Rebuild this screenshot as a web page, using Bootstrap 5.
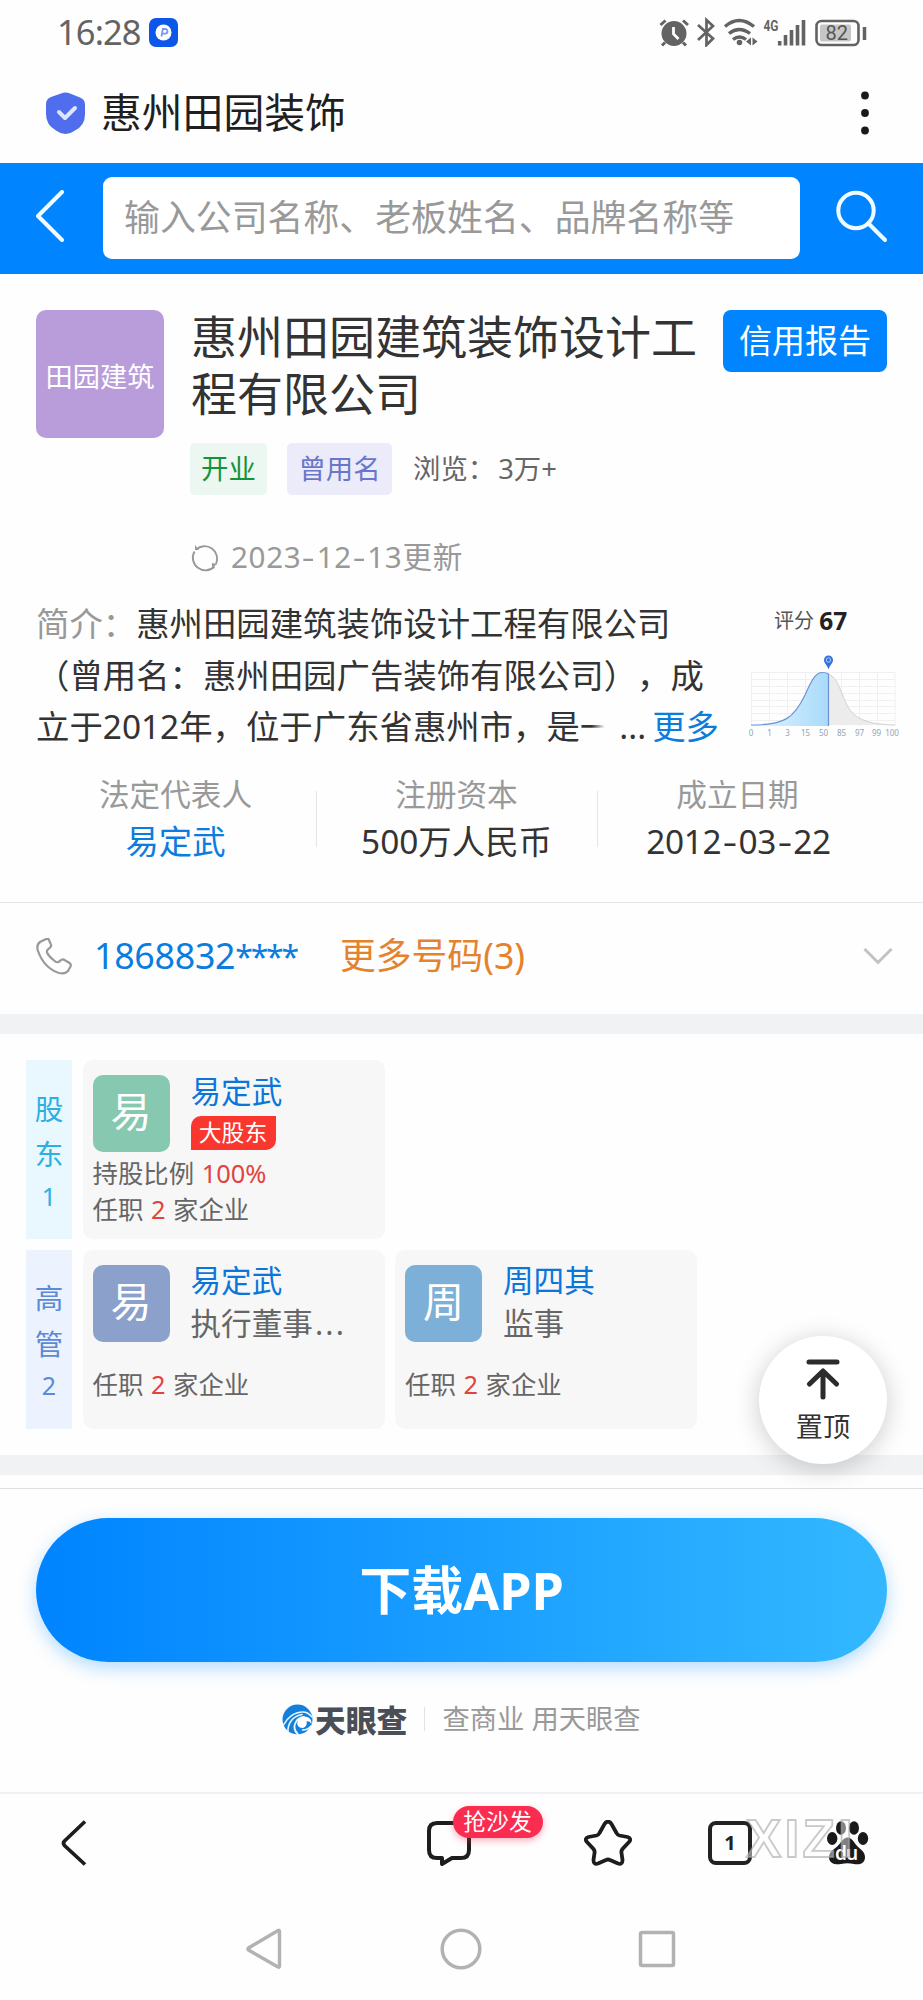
<!DOCTYPE html>
<html lang="zh-CN">
<head>
<meta charset="utf-8">
<meta name="viewport" content="width=device-width, initial-scale=1">
<title>惠州田园装饰</title>
<link rel="stylesheet" href="https://cdn.jsdelivr.net/npm/bootstrap@5.3.0/dist/css/bootstrap.min.css">
<style>
body{font-family:"Noto Sans","Noto Sans CJK SC",sans-serif;color:#333;background:#fefefe;font-size:33.4px;line-height:1;overflow-x:hidden;text-spacing-trim:space-all}
svg{display:block;flex:none}
a{text-decoration:none}
.phone{width:923px;height:2000px;overflow:hidden}
.hy{display:inline-block;width:.52em;text-align:center;font-style:normal;transform:scaleX(1.35)}
.status{height:64px;padding:0 54px 0 57px;color:#636363}
.clock{font-size:34.5px;letter-spacing:-.9px}
.titlebar{height:99px;padding:0 51px 2px 46px;color:#1f1f1f;font-size:40.8px}
.searchbar{height:111px;background:#0084ff;padding:0 35px 5px 36px}
.searchbox{width:697px;height:82px;border-radius:9px;background:#fff;padding-left:21px;font-size:35.9px;color:#999;margin:4px 0 0 39px}
.profile{height:629px;padding:36px 36px 0;border-bottom:1px solid #e4e6e9}
.logo{width:128px;height:128px;border-radius:10px;background:#b99ddb;color:#fff;font-size:27.2px;padding-top:6px}
.cname{width:520px;font-size:46px;line-height:56.5px;margin:-2px 0 0 27px;height:116px}
.report{width:164px;height:62px;border-radius:8px;background:#0084ff;color:#fff;font-size:33px;padding-bottom:2px}
.tags{margin:5px 0 0 154px;height:52px;font-size:27.4px;color:#666}
.tag{height:52px;border-radius:5px}
.open{width:77px;background:#ebf7f0;color:#149439}
.former{width:105px;background:#ebebfa;color:#6a76c9;margin:0 21px 0 20px}
.views{margin-left:3px}
.update{margin:42px 0 0 154px;height:40px;font-size:29.6px;color:#999}
.update .num{letter-spacing:.65px;margin-left:1px}
.intro{width:688px;height:156px;line-height:51.5px;margin-top:21px;font-size:33.4px;white-space:nowrap}
.label{color:#999}
.link{color:#0a7ddf}
.fadeout{background:linear-gradient(90deg,#333 35%,transparent 75%);-webkit-background-clip:text;background-clip:text;color:transparent}
.dots{margin:0 6px 0 6px}
.score{width:164px;height:144px;margin:32px -12px 0 0;font-size:20px;color:#555}
.score .head{padding-left:39px}
.score b{font-size:24.5px;color:#222}
.facts{margin:19px 9px 0 -1px;font-size:33.4px}
.fact{width:281px;height:102px}
.fact .label{font-size:30.6px;height:43px}
.fact .val{height:51px}
.fact .date{letter-spacing:-.35px;margin-left:2px}
.fact + .fact::before{content:"";position:absolute;left:0;top:18px;height:56px;width:1px;background:#e5e5e5}
.phonerow{height:111px;padding:0 30px 5px 36px;font-size:35.8px}
.tel{margin-left:22px;letter-spacing:-.3px}
.stars{font-size:32px;letter-spacing:-2.2px}
.more{margin-left:43px;color:#e5822c}
.band{height:20px;background:#f1f2f4}
.people{height:421px;padding:26px}
.second{margin-top:10.5px}
.side{width:46px;height:179px;padding-top:26px;font-size:28.5px}
.side span{height:45.5px}
.side small{font-size:25px;height:38px}
.holder{background:#e9f7ff;color:#2bb0e0}
.exec{background:#ecf2fe;color:#5b8ad6}
.person{width:302px;height:179px;border-radius:10px;background:#f7f7f7;margin-left:10.5px;padding:15px 10px;position:relative}
.face{width:77px;height:77px;border-radius:10px;color:#fff;font-size:41px;padding-bottom:4px}
.face-green{background:#86c8b0}
.face-indigo{background:#8ba1cc}
.face-blue{background:#7cb0d8}
.who{margin-left:21px}
.pname{font-size:30.6px;height:32px;color:#0a76da}
.post{font-size:30.6px;height:40px;margin-top:7px;color:#666}
.cut{letter-spacing:2.3px;margin-left:2px}
.major{width:85px;height:34px;background:#f9372f;color:#fff;font-size:22.8px;border-radius:10px 0;margin-top:9px}
.line{font-size:25.4px;height:36px;color:#666;white-space:pre;word-spacing:1px}
.line b{font-weight:400;color:#e0443e}
.lower{margin-top:23px}
.totop{right:36px;top:1336px;width:128px;height:128px;border-radius:50%;background:#fff;box-shadow:0 4px 26px rgba(0,0,0,.2);font-size:27.2px;color:#333;z-index:3;padding-top:23px;gap:12px}
.download{height:304px;margin-top:13px;border-top:1px solid #dedfe1;padding:29px 36px 0}
.dbtn{height:144px;border-radius:72px;background:linear-gradient(90deg,#0084ff,#33b8ff);color:#fff;font-size:52px;font-weight:700;box-shadow:0 6px 18px rgba(0,140,255,.3)}
.brand{height:40px;margin-top:37px;padding-left:246px;font-size:27.3px;color:#999}
.brandname{font-family:"Noto Sans CJK SC",sans-serif;font-weight:900;color:#4a4e57;font-size:30.8px;margin-left:2px}
.sep{width:1px;height:24px;background:#e2e2e2;margin:0 17px 0 17px}
.tabs{height:108px;border-top:2px solid #f1f1f3;padding:0 51px 8px 60px}
.t2{margin-left:338px}
.t3{margin-left:112px}
.t4{margin-left:76px}
.t5{margin-left:75px}
.pill{left:26.5px;top:-14px;width:90px;height:32px;border-radius:16px;background:#fa2c50;color:#fff;font-size:22.8px;box-shadow:0 3px 7px rgba(250,44,80,.35)}
.tabnum{width:44px;height:44px;border:4px solid #222;border-radius:8px;font-size:20px;font-weight:700;color:#222}
.xizi{left:746px;top:1811px;font:700 53px/56px "Liberation Sans",sans-serif;letter-spacing:3.2px;color:rgba(255,255,255,.45);-webkit-text-stroke:1.8px rgba(165,165,165,.6);z-index:4}
.sysnav{height:100px;padding:0 0 2px 246px}
.home{margin-left:158px}
.recent{margin-left:156px}
</style>
</head>
<body>
<div class="phone position-relative d-flex flex-column">
  <header class="status d-flex align-items-center">
    <span class="clock">16:28</span>
    <svg class="ms-2" width="29" height="29" viewBox="0 0 29 29"><rect width="29" height="29" rx="7" fill="#0c57ea"/><circle cx="14.5" cy="14.5" r="8" fill="#fff"/><path d="M12.5 18.5l1.3-7.5h2.4a2.3 2.3 0 0 1 0 4.600h-3" fill="none" stroke="#7c96ee" stroke-width="1.800"/></svg>
    <svg class="ms-auto" width="210" height="30" viewBox="0 0 210 30" fill="none" stroke="#636363" stroke-width="3">
      <circle cx="15" cy="16.500" r="12.500" fill="#636363" stroke="none"/><path d="M14.500 10v7l5 5" stroke="#fff" stroke-width="2.800"/><path d="M1.500 8l5-4.500M24 3.500l5 4.500M6 25.500l-3 3M24 25.500l3 3"/>
      <path d="M39 8l15 13.500-6.500 6.500V3L54 9 39 23" stroke-width="2.700"/>
      <path d="M66 9.500q14-12 29 0M70 16.500q10-8 21 0M74 22.500q6.500-5 13 0" stroke-width="3.400"/><circle cx="80.500" cy="25.500" r="2.800" fill="#636363" stroke="none"/><path d="M92 20.500v8l-5-4zM93.500 20.500v8l5-4z" fill="#636363" stroke="none"/>
      <text x="104.500" y="14" fill="#636363" stroke="none" font-family="Roboto,sans-serif" font-size="15" font-weight="700" textLength="15" lengthAdjust="spacingAndGlyphs">4G</text>
      <path d="M120.700 24v4.500M126.500 18v10.500M132.500 13v15.500M138.500 8v20.500M144.500 3v25.500" stroke-width="3.600"/>
      <rect x="157.500" y="4" width="42" height="24" rx="5" stroke-width="2.600"/><rect x="161" y="7.500" width="31" height="17" rx="2" fill="#c6c6c6" stroke="none"/><path d="M205.500 10v13" stroke-width="3.500"/>
      <text x="166.500" y="23" fill="#555" stroke="none" font-family="Roboto,sans-serif" font-size="20">82</text>
    </svg>
  </header>

  <div class="titlebar d-flex align-items-center">
    <svg class="me-3" width="39" height="42" viewBox="0 0 39 42"><path d="M15 1.500q4.500-2 9 0l10 4q5 2 5 7v10q0 11-10 16-9.500 7-19 0Q0 33 0 22V12q0-5 5-7z" fill="#4f6ded"/><path d="M13 20l6 6 10-10" fill="none" stroke="#dce6ff" stroke-width="4" stroke-linecap="round" stroke-linejoin="round"/></svg>
    <span>惠州田园装饰</span>
    <svg class="ms-auto" width="14" height="44" viewBox="0 0 14 44" fill="#1a1a1a"><circle cx="7" cy="4.500" r="3.900"/><circle cx="7" cy="22" r="3.900"/><circle cx="7" cy="39.500" r="3.900"/></svg>
  </div>

  <nav class="searchbar d-flex align-items-center">
    <svg width="28" height="52" viewBox="0 0 28 52"><path d="M26 2L2 26l24 24" fill="none" stroke="#f0fcff" stroke-width="4" stroke-linecap="round" stroke-linejoin="round"/></svg>
    <div class="searchbox d-flex align-items-center">输入公司名称、老板姓名、品牌名称等</div>
    <svg class="ms-auto" width="52" height="53" viewBox="0 0 52 53" fill="none" stroke="#f0fcff" stroke-width="4" stroke-linecap="round"><circle cx="20" cy="20.500" r="17.700"/><path d="M33 34l16 16"/></svg>
  </nav>

  <section class="profile">
    <div class="d-flex align-items-start">
      <div class="logo d-flex align-items-center justify-content-center">田园建筑</div>
      <h1 class="cname fw-normal mb-0">惠州田园建筑装饰设计工程有限公司</h1>
      <a class="report ms-auto d-flex align-items-center justify-content-center">信用报告</a>
    </div>
    <div class="tags d-flex align-items-center">
      <span class="tag open d-flex align-items-center justify-content-center">开业</span>
      <span class="tag former d-flex align-items-center justify-content-center">曾用名</span>
      <span>浏览：<span class="views">3万+</span></span>
    </div>
    <div class="update d-flex align-items-center">
      <svg class="me-2" width="32" height="32" viewBox="0 0 32 32" fill="none" stroke="#999" stroke-width="1.900"><path d="M6 8.500A12.600 12.600 0 0 1 26 23M24.500 25.500A12.600 12.600 0 0 1 4.500 10.500"/><path d="M5 4v5h4zM22 22v5l5-4z" fill="#999" stroke="none"/></svg>
      <span class="num">2023<i class="hy">-</i>12<i class="hy">-</i>13更新</span>
    </div>
    <div class="d-flex justify-content-between align-items-start">
      <div class="intro"><span class="label">简介：</span>惠州田园建筑装饰设计工程有限公司<br>（曾用名：惠州田园广告装饰有限公司），成<br>立于2012年，位于广东省惠州市，是<span class="fadeout">一</span><span class="dots">...</span><a class="link">更多</a></div>
      <div class="score">
        <div class="head d-flex align-items-center">评分&nbsp;<b>67</b></div>
        <svg class="mt-3" width="164" height="90" viewBox="0 0 164 90">
          <defs><linearGradient id="area" x1="0" x2="1"><stop offset="0" stop-color="#e4f6ff"/><stop offset="1" stop-color="#a9dafa"/></linearGradient></defs>
          <path d="M16.500 22v54M34.500 22v54M52.500 22v54M70.500 22v54M88.500 22v54M106.500 22v54M124.500 22v54M142.500 22v54M160 22v54M16 22.500h144M16 29.500h144M16 36.500h144M16 43.500h144M16 50.500h144M16 56.500h144M16 63.500h144M16 70.500h144" stroke="#f0f0f0" fill="none"/>
          <path d="M93.500 24C104 28 106 45 113 57s20 17.500 47 18H93.500z" fill="#ececec"/><path d="M93.500 24C104 28 106 45 113 57s20 17.500 47 18" fill="none" stroke="#d2d2d6"/>
          <path d="M16 75c34 0 43-7 54-30 7-16 11-23 18-22.500q3 0 5.500 1.500V76H16z" fill="url(#area)"/><path d="M16 75c34 0 43-7 54-30 7-16 11-23 18-22.500q3 0 5.500 1.500V76" fill="none" stroke="#6b93d3" stroke-width="1.200"/>
          <path d="M93.500 19.500c-1.500-5-4.500-6-4.500-9.500a4.500 4.500 0 0 1 9 0c0 3.500-3 4.500-4.500 9.500z" fill="#3871dd"/><circle cx="93.500" cy="10" r="2.200" fill="none" stroke="#9fd0ff"/>
          <g font-family="Noto Sans,sans-serif" font-size="8" fill="#8fa3bd" text-anchor="middle"><text x="16" y="86">0</text><text x="34.500" y="86">1</text><text x="52.500" y="86">3</text><text x="70.500" y="86">15</text><text x="88.500" y="86">50</text><text x="106.500" y="86">85</text><text x="124.500" y="86">97</text><text x="141.500" y="86">99</text><text x="157" y="86">100</text></g>
        </svg>
      </div>
    </div>
    <div class="facts d-flex">
      <div class="fact"><div class="label d-flex align-items-center justify-content-center">法定代表人</div><div class="val link d-flex align-items-center justify-content-center">易定武</div></div>
      <div class="fact position-relative"><div class="label d-flex align-items-center justify-content-center">注册资本</div><div class="val d-flex align-items-center justify-content-center">500万人民币</div></div>
      <div class="fact position-relative"><div class="label d-flex align-items-center justify-content-center">成立日期</div><div class="val d-flex align-items-center justify-content-center"><span class="date">2012<i class="hy">-</i>03<i class="hy">-</i>22</span></div></div>
    </div>
  </section>

  <section class="phonerow d-flex align-items-center">
    <svg width="36" height="37" viewBox="0 0 36 37"><path d="M9 1.500l-5 2.500Q0 7 2 13q6 17 21 22 6 1.500 9-2l2.500-4.500q1-2-1-3.500l-5-3q-2-1.500-4 .5l-2 1.500q-2 1-5-2-5-4-6.500-7.500-.5-2 1-3l2-2q2-1.500 .5-4l-2-4.500Q11 .7 9 1.500z" fill="none" stroke="#999" stroke-width="2.200" stroke-linejoin="round"/></svg>
    <a class="tel link">1868832<span class="stars">****</span></a>
    <a class="more">更多号码(3)</a>
    <svg class="ms-auto" width="30" height="18" viewBox="0 0 30 18"><path d="M1.500 2L15 15.500 28.500 2" fill="none" stroke="#c2c2c2" stroke-width="3"/></svg>
  </section>
  <div class="band"></div>

  <section class="people">
    <div class="d-flex">
      <div class="side holder d-flex flex-column align-items-center"><span class="d-flex align-items-center">股</span><span class="d-flex align-items-center">东</span><small class="d-flex align-items-center">1</small></div>
      <div class="person">
        <div class="d-flex"><div class="face face-green d-flex align-items-center justify-content-center">易</div><div class="who"><div class="pname d-flex align-items-center">易定武</div><div class="major d-flex align-items-center justify-content-center">大股东</div></div></div>
        <div class="line d-flex align-items-center mt-1">持股比例 <b>100%</b></div>
        <div class="line d-flex align-items-center">任职 <b>2</b> 家企业</div>
      </div>
    </div>
    <div class="d-flex second">
      <div class="side exec d-flex flex-column align-items-center"><span class="d-flex align-items-center">高</span><span class="d-flex align-items-center">管</span><small class="d-flex align-items-center">2</small></div>
      <div class="person">
        <div class="d-flex"><div class="face face-indigo d-flex align-items-center justify-content-center">易</div><div class="who"><div class="pname d-flex align-items-center">易定武</div><div class="post d-flex align-items-center">执行董事<span class="cut">...</span></div></div></div>
        <div class="line lower d-flex align-items-center">任职 <b>2</b> 家企业</div>
      </div>
      <div class="person">
        <div class="d-flex"><div class="face face-blue d-flex align-items-center justify-content-center">周</div><div class="who"><div class="pname d-flex align-items-center">周四其</div><div class="post d-flex align-items-center">监事</div></div></div>
        <div class="line lower d-flex align-items-center">任职 <b>2</b> 家企业</div>
      </div>
    </div>
  </section>
  <div class="band"></div>

  <a class="totop position-absolute d-flex flex-column align-items-center">
    <svg width="34" height="42" viewBox="0 0 34 42" fill="none" stroke="#2c2c2c" stroke-width="5" stroke-linecap="round" stroke-linejoin="round"><path d="M3 3h28M17 13v25M3.500 25L17 12l13.500 13"/></svg>
    <span>置顶</span>
  </a>

  <section class="download">
    <a class="dbtn d-flex align-items-center justify-content-center">下载APP</a>
    <div class="brand d-flex align-items-center">
      <svg width="31" height="31" viewBox="0 0 31 31"><circle cx="15.500" cy="15.500" r="15" fill="#1580dc"/><g fill="none" stroke="#eaf8ff" stroke-linecap="round"><path d="M1.500 21C5 14 12 8 21 8q5 0 9 5" stroke-width="1.500"/><path d="M6 28C5.500 19 11 12 20 10.500" stroke-width="1.500"/><path d="M16 30.500q-5-5-3-10.500 2-6.500 9-7" stroke-width="1.800"/><path d="M20.500 26q6 0 8.500-4" stroke-width="1.600"/></g><path d="M22 12.500c5 0 8 3 7.500 7.500-1.500-2.500-3-3-5-2.500 1 3-1 6-4 6.500-4 0-6-3-5-6.500s3-5 6.500-5z" fill="#fff"/></svg>
      <span class="brandname">天眼查</span><i class="sep"></i><span>查商业 用天眼查</span>
    </div>
  </section>

  <nav class="tabs d-flex align-items-center">
    <svg width="28" height="46" viewBox="0 0 28 46"><path d="M25 1.500L4.500 21q-2 2 0 4.500L25 44.500" fill="none" stroke="#1d1d1d" stroke-width="3.700"/></svg>
    <div class="t2 position-relative">
      <svg width="46" height="46" viewBox="0 0 46 46"><path d="M11 3h24q8 0 8 8v19q0 8-8 8h-9l-10 6v-6h-5q-8 0-8-8V11q0-8 8-8z" fill="none" stroke="#1d1d1d" stroke-width="4" stroke-linejoin="round"/></svg>
      <span class="pill position-absolute d-flex align-items-center justify-content-center">抢沙发</span>
    </div>
    <svg class="t3" width="48" height="46" viewBox="0 0 48 46"><path d="M20.500 4q3.500-5 7 0l5 9q1 2 3 2.500l8 1.500q4.500 1.500 1.500 5l-6.500 7q-1.500 2-1 4l1 7q0 5-4.500 3.500l-8-3.500q-2-1-4 0l-8 3.500Q9.500 45 9.500 40l1-7q.5-2-1-4L3 22q-3-3.500 1.500-5l8-1.500q2-.5 3-2.500z" fill="none" stroke="#1d1d1d" stroke-width="3.800"/></svg>
    <div class="t4 tabnum d-flex align-items-center justify-content-center">1</div>
    <svg class="t5" width="42" height="44" viewBox="0 0 42 44" fill="#1a1a1a"><ellipse cx="14" cy="7" rx="5" ry="6.800"/><ellipse cx="27" cy="7" rx="5" ry="6.800"/><ellipse cx="5.200" cy="17.500" rx="5.200" ry="6.500"/><ellipse cx="36" cy="17.500" rx="5.200" ry="6.500"/><path d="M14 21q6.500-9 13 0c4 7 11 8 11 15s-6 8-11 7q-6.500-1.500-13 0C9 44 2 43 2 36s8-8 12-15z"/><text x="8" y="39" fill="#fff" font-family="Noto Sans,sans-serif" font-weight="600" font-size="19" textLength="23">du</text></svg>
  </nav>
  <div class="xizi position-absolute">XIZI</div>

  <nav class="sysnav d-flex align-items-center">
    <svg width="36" height="42" viewBox="0 0 36 42"><path d="M32 2.500q1.500-.7 1.500 1V38q0 1.700-1.500 1L2.500 22q-1.200-1 0-2z" fill="none" stroke="#b2b2b2" stroke-width="3.400"/></svg>
    <svg class="home" width="42" height="42" viewBox="0 0 42 42"><circle cx="21" cy="21" r="18.800" fill="none" stroke="#b2b2b2" stroke-width="3.500"/></svg>
    <svg class="recent" width="38" height="38" viewBox="0 0 38 38"><rect x="2.500" y="2.500" width="33" height="33" rx="1.500" fill="none" stroke="#b2b2b2" stroke-width="3.500"/></svg>
  </nav>
</div>
<script src="https://cdn.jsdelivr.net/npm/bootstrap@5.3.0/dist/js/bootstrap.bundle.min.js"></script>
</body>
</html>
